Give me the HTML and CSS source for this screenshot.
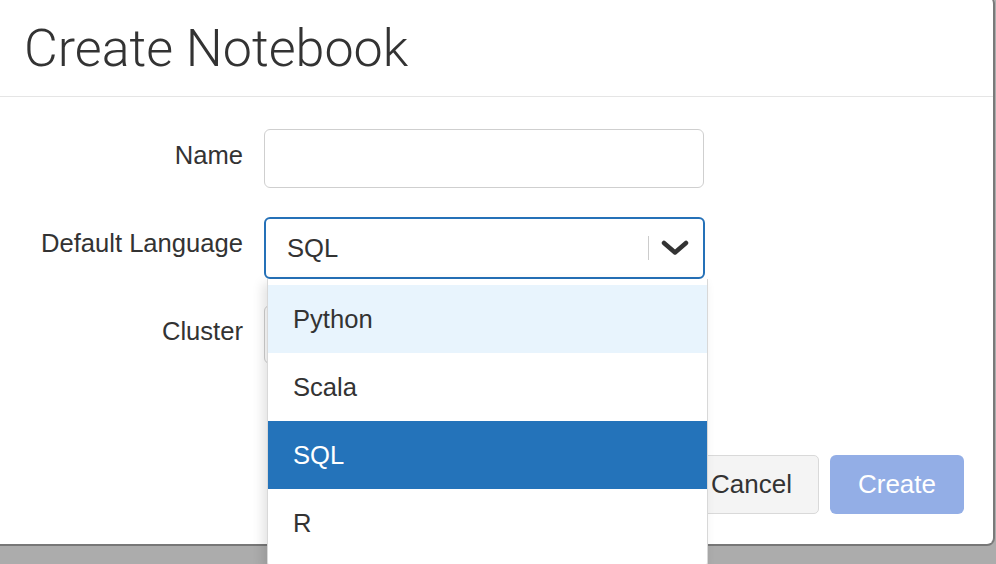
FILE: index.html
```html
<!DOCTYPE html>
<html>
<head>
<meta charset="utf-8">
<link rel="stylesheet" href="styles.css">
</head>
<body>
<div class="modal">
  <div class="modal-header">
    <h1 class="title">Create Notebook</h1>
  </div>
  <div class="modal-body">
    <div class="row">
      <label class="label">Name</label>
      <div class="control"><div class="input"></div></div>
    </div>
    <div class="row">
      <label class="label">Default Language</label>
      <div class="control select-wrap">
        <div class="select">
          <span class="select-value">SQL</span>
          <span class="sep"></span>
          <svg class="chev" width="28" height="16" viewBox="0 0 28 16"><path d="M3 3 L14 12.5 L25 3" fill="none" stroke="#333" stroke-width="4.5" stroke-linecap="round" stroke-linejoin="round"/></svg>
        </div>
        <ul class="menu">
          <li class="opt hover">Python</li>
          <li class="opt">Scala</li>
          <li class="opt selected">SQL</li>
          <li class="opt">R</li>
        </ul>
      </div>
    </div>
    <div class="row">
      <label class="label">Cluster</label>
      <div class="control"><div class="input"></div></div>
    </div>
  </div>
  <div class="modal-footer">
    <button class="btn btn-cancel">Cancel</button>
    <button class="btn btn-create">Create</button>
  </div>
</div>
</body>
</html>
```
FILE: styles.css
```css
html, body {
  margin: 0;
  padding: 0;
}
body {
  width: 996px;
  height: 564px;
  overflow: hidden;
  background: #acacac;
  font-family: "Liberation Sans", Arial, sans-serif;
  color: #333;
}
.modal {
  position: relative;
  width: 1002px;
  margin-left: -7px;
  margin-top: -4px;
  height: 550px;
  box-sizing: border-box;
  background: #fff;
  border-right: 2px solid #7a7a7a;
  border-bottom: 2px solid #777;
  border-radius: 0 8px 8px 0;
  display: flex;
  flex-direction: column;
}
.modal-header {
  height: 101px;
  box-sizing: border-box;
  border-bottom: 1px solid #e5e5e5;
  display: flex;
  align-items: center;
  padding-left: 31px;
  padding-top: 4px;
}
.title {
  margin: 0;
  font-family: "Roboto", "Liberation Sans", sans-serif;
  font-weight: 300;
  font-size: 52px;
  color: #333;
}
.modal-body {
  padding-top: 32px;
  display: flex;
  flex-direction: column;
  gap: 29px;
}
.row {
  display: flex;
  align-items: center;
  height: 59px;
}
.label {
  width: 271px;
  text-align: right;
  font-size: 25.6px;
  padding-right: 21px;
  margin-bottom: 6px;
  box-sizing: border-box;
}
.control {
  width: 440px;
  height: 59px;
  position: relative;
}
.input {
  height: 100%;
  box-sizing: border-box;
  border: 1.5px solid #cfcfcf;
  border-radius: 6px;
  background: #fff;
}
.select-wrap {
  z-index: 2;
}
.select {
  height: 62px;
  width: 441px;
  box-sizing: border-box;
  border: 2.5px solid #2571b8;
  border-radius: 6px;
  display: flex;
  align-items: center;
  padding-left: 21px;
  padding-right: 14px;
  background: #fff;
}
.select-value {
  flex: 1;
  font-size: 25.6px;
}
.sep {
  width: 1.5px;
  height: 24px;
  background: #ccc;
  margin-right: 12px;
}
.chev {
  display: block;
}
.menu {
  position: absolute;
  left: 3px;
  top: 62px;
  width: 441px;
  margin: 0;
  padding: 6px 0 10px;
  list-style: none;
  background: #fff;
  border: 1px solid #d8d8d8;
  border-top: none;
  border-radius: 0 0 6px 6px;
  box-shadow: -4px 4px 12px rgba(0, 0, 0, 0.12);
  box-sizing: border-box;
}
.opt {
  height: 68px;
  display: flex;
  align-items: center;
  padding-left: 25px;
  font-size: 25.6px;
  color: #333;
}
.opt.hover {
  background: #e8f4fd;
}
.opt.selected {
  background: #2473ba;
  color: #fff;
}
.modal-footer {
  margin-top: auto;
  padding: 0 29px 30px 0;
  display: flex;
  justify-content: flex-end;
  gap: 11px;
}
.btn {
  height: 59px;
  font-family: "Liberation Sans", Arial, sans-serif;
  font-size: 26px;
  border-radius: 5px;
  padding: 0 26px;
  box-sizing: border-box;
}
.btn-cancel {
  background: #f4f4f4;
  border: 1.5px solid #d9d9d9;
  color: #333;
}
.btn-create {
  background: #93aee6;
  border: none;
  color: #fff;
  border-radius: 6px;
  padding: 0 28px;
}
```
